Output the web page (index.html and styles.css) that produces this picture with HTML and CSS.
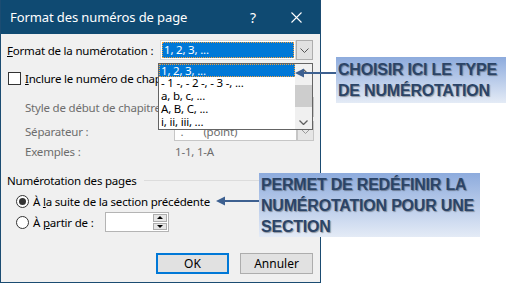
FILE: index.html
```html
<!DOCTYPE html>
<html lang="fr">
<head>
  <meta charset="UTF-8">
  <title>Format des numéros de page</title>
  <link rel="stylesheet" href="styles.css">
</head>
<body>
<div class="canvas">

  <!-- Boîte de dialogue -->
  <div class="dialog">
    <div class="titlebar">
      <span class="title">Format des numéros de page</span>
      <span class="tb-btn help">?</span>
      <span class="tb-btn close">
        <svg width="11" height="11" viewBox="0 0 11 11"><path d="M0.5 0.5L10.5 10.5M10.5 0.5L0.5 10.5" stroke="#fff" stroke-width="1.1" fill="none"/></svg>
      </span>
    </div>

    <div class="content">
      <div class="row row-format">
        <span class="label-main"><u>F</u>ormat de la numérotation :</span>
        <div class="combo combo-main">
          <div class="field"><span class="selected">1, 2, 3, ...</span></div>
          <div class="drop-btn">
            <svg width="9" height="5" viewBox="0 0 9 5"><path d="M0.5 0.5L4.5 4.5L8.5 0.5" stroke="#555" fill="none"/></svg>
          </div>
        </div>
      </div>

      <div class="row row-check">
        <span class="checkbox"></span>
        <span class="check-label"><u>I</u>nclure le numéro de chapitre</span>
      </div>

      <div class="row row-indent row-style">
        <span class="label-sub disabled">Style de début de chapitre :</span>
        <div class="combo combo-sub">
          <div class="field"></div>
          <div class="drop-btn"></div>
        </div>
      </div>

      <div class="row row-indent row-sep">
        <span class="label-sub disabled">Séparateur :</span>
        <div class="combo combo-sub">
          <div class="field"><span class="disabled sep-value"><span>.</span><span>(point)</span></span></div>
          <div class="drop-btn">
            <svg width="9" height="5" viewBox="0 0 9 5"><path d="M0.5 0.5L4.5 4.5L8.5 0.5" stroke="#999" fill="none"/></svg>
          </div>
        </div>
      </div>

      <div class="row row-indent">
        <span class="label-sub disabled">Exemples :</span>
        <span class="disabled">1-1, 1-A</span>
      </div>

      <div class="row group-head">
        <span>Numérotation des pages</span>
        <span class="group-line"></span>
      </div>

      <div class="row row-radio">
        <span class="radio checked"></span>
        <span>À <u>l</u>a suite de la section précédente</span>
      </div>

      <div class="row row-radio">
        <span class="radio"></span>
        <span class="radio-label">À <u>p</u>artir de :</span>
        <div class="spin">
          <div class="spin-field"></div>
          <div class="spin-btns">
            <span class="spin-up"></span>
            <span class="spin-down"></span>
          </div>
        </div>
      </div>

      <div class="row row-buttons">
        <button class="btn btn-default">OK</button>
        <button class="btn">Annuler</button>
      </div>
    </div>
  </div>

  <!-- Liste déroulante ouverte -->
  <div class="droplist">
    <ul class="items">
      <li class="current">1, 2, 3, ...</li>
      <li>- 1 -, - 2 -, - 3 -, ...</li>
      <li>a, b, c, ...</li>
      <li>A, B, C, ...</li>
      <li>i, ii, iii, ...</li>
    </ul>
    <div class="scrollbar">
      <svg class="sb-arrow" width="9" height="5" viewBox="0 0 9 5"><path d="M0.5 4.5L4.5 0.5L8.5 4.5" stroke="#606060" stroke-width="1.3" fill="none"/></svg>
      <span class="sb-thumb"></span>
      <svg class="sb-arrow" width="9" height="5" viewBox="0 0 9 5"><path d="M0.5 0.5L4.5 4.5L8.5 0.5" stroke="#606060" stroke-width="1.3" fill="none"/></svg>
    </div>
  </div>

  <!-- Flèches d'annotation -->
  <svg class="arrows" width="506" height="284" viewBox="0 0 506 284">
    <path d="M337 73H303" stroke="#3d6090" stroke-width="2.2" fill="none"/>
    <path d="M295 73L304 68.5L304 77.5Z" fill="#3d6090"/>
    <path d="M259 201H224" stroke="#3d6090" stroke-width="2.2" fill="none"/>
    <path d="M216 201L225 196.5L225 205.5Z" fill="#3d6090"/>
  </svg>

  <div class="callout callout-top">CHOISIR ICI LE TYPE<br>DE NUMÉROTATION</div>
  <div class="callout callout-bottom">PERMET DE REDÉFINIR LA<br>NUMÉROTATION POUR UNE<br>SECTION</div>
</div>
</body>
</html>
```

FILE: styles.css
```css
* {
  box-sizing: border-box;
}

body {
  margin: 0;
  background: #fff;
  font-family: "Noto Sans", sans-serif;
  font-size: 11.5px;
  letter-spacing: -0.2px;
  color: #000;
}

.canvas {
  position: relative;
  width: 506px;
  height: 284px;
  overflow: hidden;
}

/* dialog */

.dialog {
  width: 321px;
  height: 283px;
  background: #f0f0f0;
  border: 1px solid #1b4c72;
  border-top: none;
  display: flex;
  flex-direction: column;
}

.titlebar {
  height: 34px;
  background: #0f4a72;
  color: #fff;
  display: flex;
  align-items: center;
  padding-left: 9px;
  font-size: 13px;
  letter-spacing: -0.1px;
}

.title {
  flex: 1;
}

.tb-btn {
  display: flex;
  align-items: center;
  justify-content: center;
  height: 100%;
}

.help {
  width: 40px;
  font-size: 14px;
}

.close {
  width: 47px;
}

.content {
  padding: 6px 6px 0 6px;
  display: flex;
  flex-direction: column;
}

.row {
  display: flex;
  align-items: center;
  height: 20px;
}

.disabled {
  color: #6d6d6d;
}

u {
  text-underline-offset: 1px;
}

.label-main {
  width: 153px;
}

.combo {
  display: flex;
  height: 20px;
}

.combo-main {
  width: 153px;
}

.field {
  flex: 1;
  background: #fff;
  border: 1px solid #d9d9d9;
  display: flex;
  align-items: center;
  padding: 1px;
}

.selected {
  flex: 1;
  height: 100%;
  background: #0078d7;
  color: #fff;
  border: 1px dotted #f0a040;
  line-height: 14px;
  padding-left: 1px;
}

.drop-btn {
  width: 17px;
  background: #e1e1e1;
  border: 1px solid #adadad;
  display: flex;
  align-items: center;
  justify-content: center;
}

.row-check {
  margin-top: 8px;
  gap: 4px;
}

.checkbox {
  width: 13px;
  height: 13px;
  margin-left: 1px;
  background: #fff;
  border: 1px solid #333;
}

.check-label {
  white-space: nowrap;
}

.row-indent {
  padding-left: 18px;
}

.row-style {
  margin-top: 9px;
}

.row-sep {
  margin-top: 4px;
}

.label-sub {
  width: 150px;
  white-space: nowrap;
}

.combo-sub {
  width: 140px;
}

.combo-sub .field {
  border-color: #c6c6c6;
  padding-left: 5px;
}

.combo-sub .drop-btn {
  background: #e6e6e6;
  border-color: #c6c6c6;
}

.sep-value {
  display: flex;
  gap: 20px;
}

.group-head {
  margin-top: 9px;
  margin-right: -6px;
  gap: 7px;
}

.group-line {
  flex: 1;
  border-top: 1px solid #dcdcdc;
}

.row-radio {
  margin-top: 1px;
  padding-left: 9px;
  gap: 4px;
}

.radio {
  width: 13px;
  height: 13px;
  border: 1px solid #333;
  border-radius: 50%;
  background: #fff;
  display: flex;
  align-items: center;
  justify-content: center;
}

.radio.checked::after {
  content: "";
  width: 7px;
  height: 7px;
  border-radius: 50%;
  background: #333;
}

.radio-label {
  width: 68px;
}

.spin {
  width: 64px;
  height: 20px;
  display: flex;
  background: #fff;
  border: 1px solid #b4b4b4;
}

.spin-field {
  flex: 1;
}

.spin-btns {
  width: 15px;
  display: flex;
  flex-direction: column;
  gap: 1px;
  padding: 1px 1px 1px 0;
}

.spin-up,
.spin-down {
  flex: 1;
  background: #e6e6e6;
  border: 1px solid #adadad;
  display: flex;
  align-items: center;
  justify-content: center;
}

.spin-up::after {
  content: "";
  border-left: 3px solid transparent;
  border-right: 3px solid transparent;
  border-bottom: 3px solid #000;
}

.spin-down::after {
  content: "";
  border-left: 3px solid transparent;
  border-right: 3px solid transparent;
  border-top: 3px solid #000;
}

.row-buttons {
  margin-top: 21px;
  height: 21px;
  justify-content: flex-end;
  gap: 11px;
  padding-right: 1px;
}

.btn {
  width: 73px;
  height: 21px;
  font-family: inherit;
  font-size: 12px;
  background: #e1e1e1;
  border: 1px solid #adadad;
  padding: 0;
  color: #000;
}

.btn-default {
  border: 2px solid #0078d7;
}

/* open drop-down list */

.droplist {
  position: absolute;
  left: 158px;
  top: 63px;
  width: 155px;
  height: 67px;
  background: #fff;
  border: 1px solid #646464;
  display: flex;
}

.items {
  list-style: none;
  margin: 0;
  padding: 0;
  flex: 1;
}

.items li {
  height: 13px;
  line-height: 12px;
  padding-left: 2px;
  white-space: nowrap;
}

.items li.current {
  background: #0078d7;
  color: #fff;
  border: 1px dotted #f0a040;
  padding-left: 1px;
}

.scrollbar {
  width: 17px;
  background: #f0f0f0;
  display: flex;
  flex-direction: column;
  align-items: center;
  padding: 5px 0 4px;
}

.sb-thumb {
  width: 100%;
  height: 22px;
  background: #cdcdcd;
  margin: 11px 0 auto;
}

/* annotations */

.arrows {
  position: absolute;
  left: 0;
  top: 0;
}

.callout {
  position: absolute;
  background: linear-gradient(#8dabdd, #e4ebf6);
  color: #2b4467;
  font-family: "Liberation Sans", Arial, sans-serif;
  font-weight: bold;
  font-size: 16px;
  letter-spacing: -0.2px;
  line-height: 21px;
  text-shadow: 1px 1px 1px rgba(0, 0, 0, 0.35);
  padding-left: 2px;
  white-space: nowrap;
}

.callout-top {
  left: 336px;
  top: 57px;
  width: 170px;
  height: 46px;
  padding-top: 2px;
}

.callout-bottom {
  left: 259px;
  top: 173px;
  width: 221px;
  height: 64px;
  padding-top: 1px;
}
```
